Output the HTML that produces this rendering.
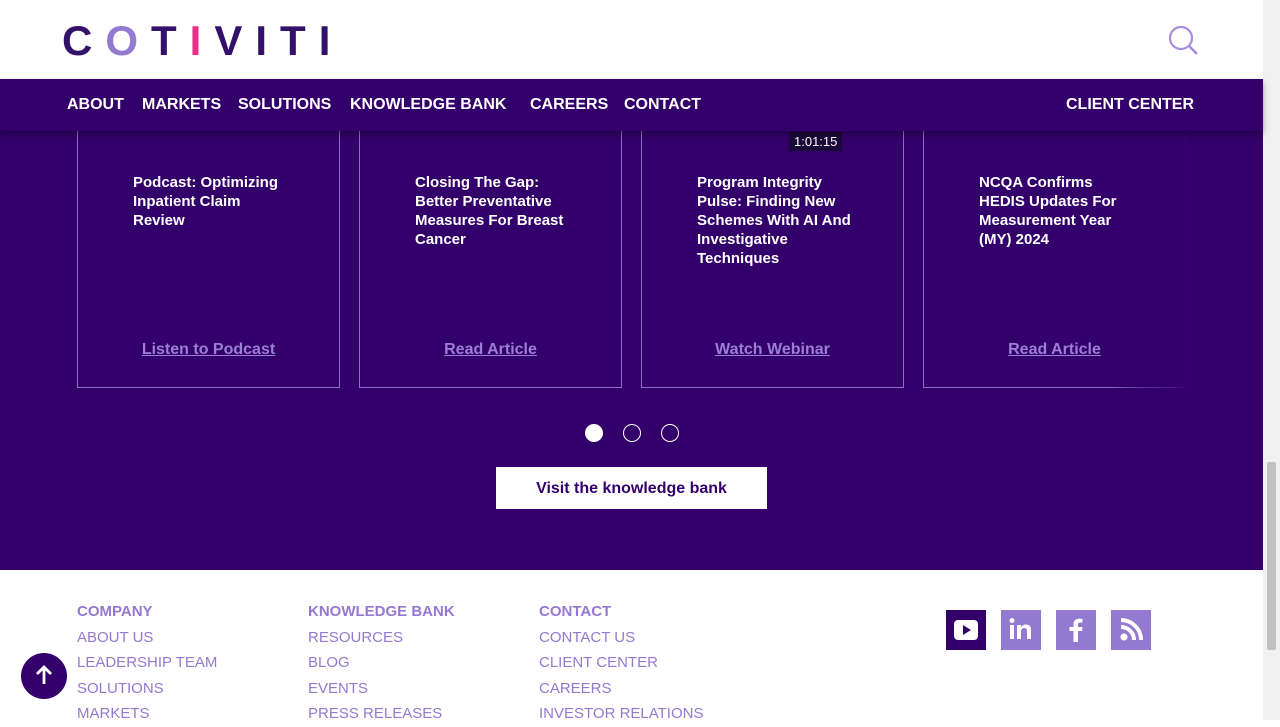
<!DOCTYPE html>
<html><head><style>
*{margin:0;padding:0;box-sizing:border-box}
body{width:1280px;height:720px;overflow:hidden;font-family:"Liberation Sans",sans-serif;background:#fff;position:relative}
.sb{position:absolute;right:0;top:0;width:17px;height:720px;background:#f1f1f1}
.sb div{position:absolute;left:4px;top:462px;width:9px;height:188px;background:#c1c1c1;border-radius:2px}
.hdr{position:absolute;left:0;top:0;width:1263px;height:79px;background:#fff}
.logo{position:absolute;left:62px;top:17px;font-size:42px;font-weight:bold;letter-spacing:13px;color:#33116b}
.nav{position:absolute;left:0;top:79px;width:1263px;height:52px;background:#33006b;box-shadow:0 3px 6px rgba(0,0,0,.35);z-index:5;color:#fff;font-weight:bold;font-size:16px}
.nav span{position:absolute;top:17px}
.main{position:absolute;left:0;top:131px;width:1263px;height:439px;background:#33006b}
.card{position:absolute;top:-10px;width:263px;height:267px;border:1px solid #8a70c8;border-top:none}
.card h3{position:absolute;left:55px;top:52px;width:160px;color:#fff;font-size:15px;line-height:19px;font-weight:bold}
.card a{position:absolute;left:0;right:0;top:220px;text-align:center;color:#9b7fd6;font-weight:bold;font-size:16px;text-decoration:underline}
.dot{position:absolute;top:293px;width:18px;height:18px;border-radius:50%;border:1.5px solid #fff}
.btn{position:absolute;left:496px;top:336px;width:271px;height:42px;background:#fff;color:#33006b;font-weight:bold;font-size:16px;text-align:center;line-height:44px}
.ft{position:absolute;top:570px;left:0;width:1263px;height:150px;background:#fff;color:#9479d0;font-size:15px}
.ft div{position:absolute;line-height:25.5px}
.ft b{display:block}
.ic{position:absolute;top:40px;width:40px;height:40px;background:#9479d0}
</style></head><body>
<div class="hdr"><div class="logo">C<span style="color:#9479d0">O</span>T<span style="color:#e8308a">I</span>VIT<span style="letter-spacing:0">I</span></div>
<svg style="position:absolute;left:1168px;top:25px" width="32" height="32"><circle cx="13" cy="13" r="11" fill="none" stroke="#a98be0" stroke-width="2.2"/><line x1="21" y1="21" x2="29" y2="29" stroke="#a98be0" stroke-width="2.5"/></svg></div>
<div class="nav"><span style="left:67px">ABOUT</span><span style="left:142px">MARKETS</span><span style="left:238px">SOLUTIONS</span><span style="left:350px">KNOWLEDGE BANK</span><span style="left:530px">CAREERS</span><span style="left:624px">CONTACT</span><span style="left:1066px">CLIENT CENTER</span></div>
<div class="main">
<div class="card" style="left:77px"><h3>Podcast: Optimizing Inpatient Claim Review</h3><a>Listen to Podcast</a></div>
<div class="card" style="left:359px"><h3>Closing The Gap: Better Preventative Measures For Breast Cancer</h3><a>Read Article</a></div>
<div class="card" style="left:641px"><div style="position:absolute;left:147px;top:11px;background:#1a0838;color:#fff;font-size:13px;padding:2px 5px">1:01:15</div><h3>Program Integrity Pulse: Finding New Schemes With AI And Investigative Techniques</h3><a>Watch Webinar</a></div>
<div class="card" style="left:923px;border-right-color:#4a2585"><h3>NCQA Confirms HEDIS Updates For Measurement Year (MY) 2024</h3><a>Read Article</a></div>
<div style="position:absolute;left:1110px;top:0;width:153px;height:270px;background:linear-gradient(90deg,rgba(51,0,107,0),rgba(51,0,107,.5) 20%,#33006b 60%)"></div>
<div class="dot" style="left:585px;background:#fff"></div><div class="dot" style="left:623px"></div><div class="dot" style="left:661px"></div>
<div class="btn">Visit the knowledge bank</div>
</div>
<div class="ft">
<div style="left:77px;top:29px"><b>COMPANY</b>ABOUT US<br>LEADERSHIP TEAM<br>SOLUTIONS<br>MARKETS</div>
<div style="left:308px;top:29px"><b>KNOWLEDGE BANK</b>RESOURCES<br>BLOG<br>EVENTS<br>PRESS RELEASES</div>
<div style="left:539px;top:29px"><b>CONTACT</b>CONTACT US<br>CLIENT CENTER<br>CAREERS<br>INVESTOR RELATIONS</div>
<div class="ic" style="left:946px;background:#33006b"><svg width="40" height="40"><rect x="8" y="10" width="24" height="20" rx="4" fill="#fff"/><path d="M17 15v10l8-5z" fill="#33006b"/></svg></div>
<div class="ic" style="left:1001px"><svg width="40" height="40"><rect x="9" y="15" width="4" height="14" fill="#fff"/><circle cx="11" cy="10.5" r="2.5" fill="#fff"/><path d="M16 15h4v2c1-1.5 3-2.5 5-2.5 3 0 5 2 5 5V29h-4v-8c0-2-1-3-2.5-3S20 19 20 21v8h-4z" fill="#fff"/></svg></div>
<div class="ic" style="left:1056px"><svg width="40" height="40"><path d="M22 32V21h4l.5-4H22v-2.5c0-1.2.4-2 2-2h2.5V9c-.5 0-2-.2-3.5-.2-3.5 0-5.5 2-5.5 5.5V17h-4v4h4v11z" fill="#fff"/></svg></div>
<div class="ic" style="left:1111px"><svg width="40" height="40"><circle cx="13" cy="27" r="3.5" fill="#fff"/><path d="M10 17a13 13 0 0 1 13 13M10 10a20 20 0 0 1 20 20" stroke="#fff" stroke-width="4" fill="none"/></svg></div>
</div>
<div style="position:absolute;left:21px;top:653px;width:46px;height:46px;border-radius:50%;background:#33006b"><svg width="46" height="46"><path d="M23 31V15M16 21l7-7 7 7" stroke="#fff" stroke-width="2.8" fill="none"/></svg></div>
<div class="sb"><div></div></div>
</body></html>
